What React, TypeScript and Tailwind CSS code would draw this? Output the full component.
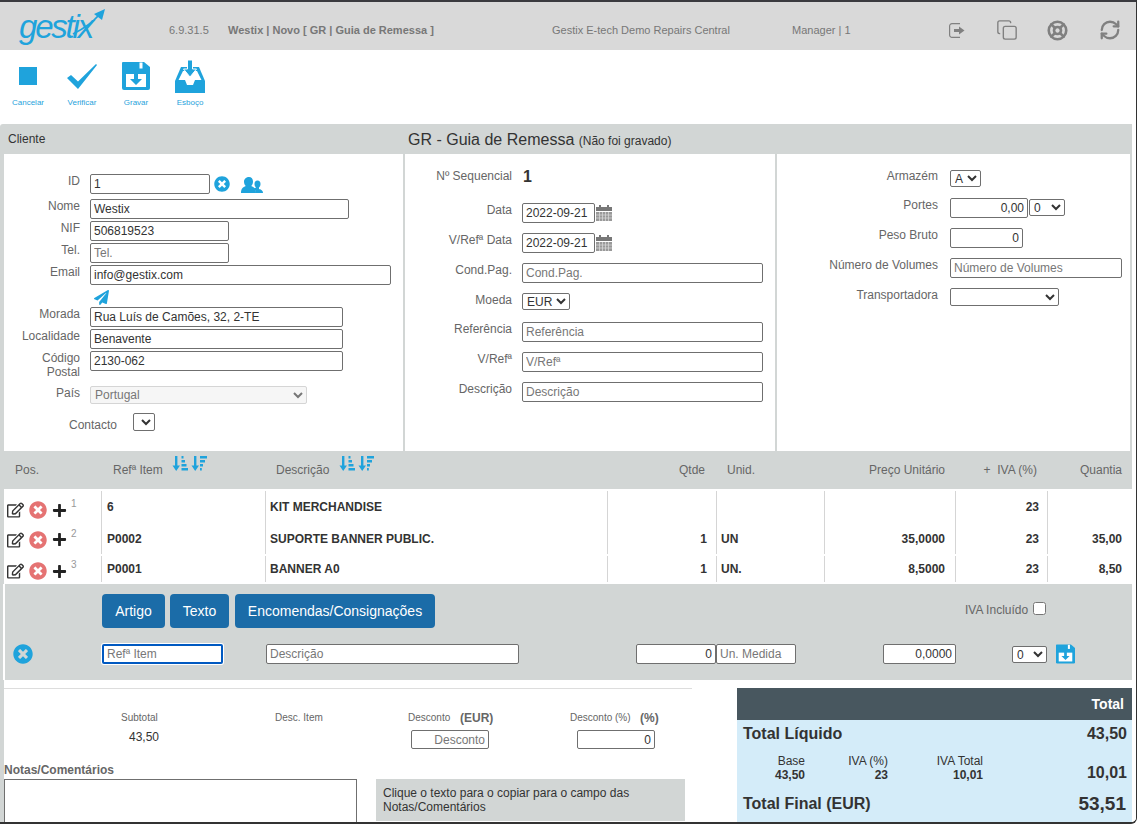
import type { ReactNode } from 'react';
import { Copy, LifeBuoy, RefreshCw } from 'lucide-react';
import { FaPaperPlane, FaPlus, FaRegEdit, FaTimesCircle } from 'react-icons/fa';

const inputCls = 'h-5 border border-[#6f6f6f] rounded-[2px] bg-white px-[3px] text-[12px] text-[#333] placeholder:text-[#777] outline-none';
const selectCls = 'border border-[#6f6f6f] rounded-[2px] bg-white text-[12px] text-[#333] outline-none';

function FloppyIcon({ className }: { className?: string }) {
  return (
    <svg viewBox="0 0 28 28" className={className}>
      <path fill="#1fa3dc" d="M1 0h21l6 5v21a2 2 0 0 1-2 2H2a2 2 0 0 1-2-2V1a1 1 0 0 1 1-1z" />
      <rect x="17.5" y="0.5" width="3" height="6" fill="#fff" />
      <path fill="#fff" d="M4 12h20v13H4z" />
      <path fill="#1fa3dc" d="M12 11h4v6h4l-6 6-6-6h4z" />
    </svg>
  );
}

function InboxIcon({ className }: { className?: string }) {
  return (
    <svg viewBox="0 0 30 33" className={className}>
      <polygon fill="#1fa3dc" points="6,7 24,7 30,21 30,33 0,33 0,21" />
      <polygon fill="#fff" points="8,11 22,11 26.5,20 20,20 18,25 12,25 10,20 3.5,20" />
      <path fill="#1fa3dc" stroke="#fff" strokeWidth="1" d="M12.5 0h5v9h4l-6.500 8-6.500-8h4z" />
    </svg>
  );
}

function CheckIcon() {
  return (
    <svg viewBox="0 0 30 25" className="h-[25px] w-[30px]">
      <polygon fill="#1fa3dc" points="0,14 4,11 11,17.500 29,0 30,1 11,25" />
    </svg>
  );
}

function UsersIcon() {
  return (
    <svg viewBox="0 0 22 16" className="ml-[11px] h-4 w-[22px] translate-y-[1px]">
      <path fill="#1fa3dc" d="M18 12c0 0 4 .5 4 4h-7c0-2-1-3.500-2.500-4.500 1-.5 2-.5 2.500-1-1-1-1.500-2-1.500-3.500 0-2 1-3.500 3-3.500s3 1.500 3 3.500c0 1.500-.5 2.500-1.500 3.500z" />
      <path fill="#1fa3dc" d="M8 0c2.500 0 4 2 4 4.500 0 2-.8 3.500-1.800 4.500 2.800 1 4.800 2.500 4.800 7H0c0-4.500 2-6 4.800-7C3.800 8 3 6.500 3 4.500 3 2 5.500 0 8 0z" />
    </svg>
  );
}

function SortIcon({ flip }: { flip?: boolean }) {
  return (
    <svg viewBox="0 0 16 15" className="h-[15px] w-[16px]">
      <path fill="#1fa3dc" d="M3 0h2.400v9.500H8L4.200 15 .5 9.500H3z" />
      {flip ? (
        <path fill="#1fa3dc" d="M9 0h7v2.500H9zM9 4h5v2.500H9zM9 8h3v2.500H9zM9 12h1.800v2.500H9z" />
      ) : (
        <path fill="#1fa3dc" d="M9.500 0h2v2.500h-2zM9.500 4h3.500v2.500H9.500zM9.500 8h5v2.500h-5zM9.500 12h6.500v2.500H9.500z" />
      )}
    </svg>
  );
}

function CalendarIcon() {
  return (
    <svg viewBox="0 0 16 16" className="ml-[1px] h-4 w-4 shrink-0 translate-y-[2px]">
      <path fill="#777" d="M0 2h3V0h2v2h6V0h2v2h3v4H0z" />
      <path fill="#999" d="M0 7h16v9H0z" />
      <path stroke="#ddd" strokeWidth=".7" d="M3.500 7v9M6.500 7v9M9.500 7v9M12.500 7v9M0 10h16M0 13h16" />
    </svg>
  );
}

function ExitIcon() {
  return (
    <svg viewBox="0 0 16 15" className="h-[15px] w-4" fill="none">
      <path stroke="#808080" strokeWidth="1.200" d="M11 .6H3A2.400 2.400 0 0 0 .6 3v9A2.400 2.400 0 0 0 3 14.400h8" />
      <path fill="#808080" d="M5 6h5V3.500l5.500 4-5.500 4V9H5z" />
    </svg>
  );
}

function Label({ children, className }: { children: ReactNode; className?: string }) {
  return <div className={`text-right text-[12px] leading-[14px] text-[#666] ${className ?? ''}`}>{children}</div>;
}

function ClientRow({ label, className, children }: { label: ReactNode; className: string; children: ReactNode }) {
  return (
    <div className={`flex ${className}`}>
      <Label className="w-[76px]">{label}</Label>
      <div className="ml-[10px] flex items-center">{children}</div>
    </div>
  );
}

function MidRow({ label, className, children }: { label: ReactNode; className: string; children: ReactNode }) {
  return (
    <div className={`flex ${className}`}>
      <Label className="w-[107px]">{label}</Label>
      <div className="ml-[10px] flex items-start">{children}</div>
    </div>
  );
}

function RightRow({ label, className, children }: { label: ReactNode; className: string; children: ReactNode }) {
  return (
    <div className={`flex ${className}`}>
      <Label className="w-[161px]">{label}</Label>
      <div className="ml-[12px] flex items-start">{children}</div>
    </div>
  );
}

const gridCols = 'grid grid-cols-[97px_164px_342px_109px_108px_131px_92px_85px]';

const items = [
  { pos: 1, ref: '6', desc: 'KIT MERCHANDISE', qty: '', unit: '', price: '', iva: '23', total: '', rowCls: 'h-[34px] pt-[2px]', iconCls: 'translate-y-[3px]' },
  { pos: 2, ref: 'P0002', desc: 'SUPORTE BANNER PUBLIC.', qty: '1', unit: 'UN', price: '35,0000', iva: '23', total: '35,00', rowCls: 'h-[31px]', iconCls: 'translate-y-[1px]' },
  { pos: 3, ref: 'P0001', desc: 'BANNER A0', qty: '1', unit: 'UN.', price: '8,5000', iva: '23', total: '8,50', rowCls: 'h-[28px] pt-[2px]', iconCls: 'translate-y-[2px]' },
];

const toolbar = [
  { label: 'Cancelar', icon: <div className="h-[18px] w-[18px] bg-[#1fa3dc]" /> },
  { label: 'Verificar', icon: <CheckIcon /> },
  { label: 'Gravar', icon: <FloppyIcon className="h-7 w-7" /> },
  { label: 'Esboço', icon: <InboxIcon className="h-[33px] w-[30px]" /> },
];

export default function App() {
  return (
    <div className="relative flex h-[824px] w-[1137px] flex-col overflow-hidden rounded-br-md border-r border-b-2 border-[#333] bg-white font-['Liberation_Sans',Arial,sans-serif] text-[#333]">
      <div className="h-[2px] shrink-0 bg-[#3a3a3f]" />

      {/* top bar */}
      <header className="flex h-[48px] shrink-0 items-center bg-[#d9d9d9] pt-[8px] text-[11px] text-[#777]">
        <div className="relative ml-[19px] h-[40px] w-[150px] shrink-0">
          <span className="absolute left-0 top-[-2px] text-[33px] italic leading-[38px] tracking-[-2.200px] text-[#1fa3dc]">gestix</span>
          <svg viewBox="0 0 40 30" className="absolute left-[52px] top-[-2px] h-[30px] w-[40px]">
            <path fill="none" stroke="#1fa3dc" strokeWidth="1.800" d="M2 26 C 12 21, 21 15, 28 7" />
            <path fill="#1fa3dc" d="M23 6l11-5-3 11z" />
          </svg>
        </div>
        <span className="w-[59px] shrink-0">6.9.31.5</span>
        <span className="w-[324px] shrink-0 font-bold">Westix | Novo [ GR | Guia de Remessa ]</span>
        <span className="w-[240px] shrink-0">Gestix E-tech Demo Repairs Central</span>
        <span className="w-[140px] shrink-0">Manager | 1</span>
        <div className="flex shrink-0 items-center text-[#808080]">
          <span className="flex w-[50px] justify-center"><ExitIcon /></span>
          <span className="flex w-[50px] justify-center"><Copy size={22} strokeWidth={1.500} /></span>
          <span className="flex w-[50px] justify-center"><LifeBuoy size={21} strokeWidth={3} /></span>
          <span className="flex w-[55px] justify-center"><RefreshCw size={22} strokeWidth={2.500} /></span>
        </div>
      </header>

      {/* toolbar */}
      <div className="flex h-[74px] shrink-0 pl-[1px] pt-[4px]">
        {toolbar.map(t => (
          <div key={t.label} className="flex w-[54px] flex-col items-center">
            <div className="flex h-[44px] items-center justify-center">{t.icon}</div>
            <div className="text-[8px] leading-[10px] text-[#1fa3dc]">{t.label}</div>
          </div>
        ))}
      </div>

      <div className="min-h-0 flex-1 bg-white">
        <div className="w-[1132px]">
          <div className="rounded-tl-[3px] bg-[#d2d6d5] pl-[4px]">
            {/* panel title */}
            <div className="flex h-[30px] items-center">
              <span className="w-[404px] pl-[4px] text-[12px] text-[#333]">Cliente</span>
              <span className="translate-y-[1px] text-[16px] text-[#333]">GR - Guia de Remessa <span className="text-[12px]">(Não foi gravado)</span></span>
            </div>

            {/* form columns */}
            <div className="flex h-[297px] gap-[2px]">
              <div className="w-[399px] bg-white pt-[20px]">
                <ClientRow label="ID" className="">
                  <input className={`${inputCls} w-[120px]`} defaultValue="1" />
                  <FaTimesCircle className="ml-[4px] h-[16px] w-[16px] text-[#1fa3dc]" />
                  <UsersIcon />
                </ClientRow>
                <ClientRow label="Nome" className="mt-[5px]"><input className={`${inputCls} w-[259px]`} defaultValue="Westix" /></ClientRow>
                <ClientRow label="NIF" className="mt-[2px]"><input className={`${inputCls} w-[139px]`} defaultValue="506819523" /></ClientRow>
                <ClientRow label="Tel." className="mt-[2px]"><input className={`${inputCls} w-[139px]`} placeholder="Tel." /></ClientRow>
                <ClientRow label="Email" className="mt-[2px]"><input className={`${inputCls} w-[301px]`} defaultValue="info@gestix.com" /></ClientRow>
                <div className="ml-[90px] mt-[5px] h-[15px]"><FaPaperPlane className="h-[15px] w-[15px] text-[#1fa3dc]" /></div>
                <ClientRow label="Morada" className="mt-[2px]"><input className={`${inputCls} w-[253px]`} defaultValue="Rua Luís de Camões, 32, 2-TE" /></ClientRow>
                <ClientRow label="Localidade" className="mt-[2px]"><input className={`${inputCls} w-[253px]`} defaultValue="Benavente" /></ClientRow>
                <div className="mt-[2px] flex h-[35px] items-start">
                  <Label className="w-[76px]">Código<br />Postal</Label>
                  <input className={`${inputCls} ml-[10px] w-[253px]`} defaultValue="2130-062" />
                </div>
                <ClientRow label="País" className="h-[18px]">
                  <select disabled className="h-[18px] w-[217px] rounded-[2px] border border-[#d5d5d5] bg-[#f6f6f6] text-[12px] text-[#777]"><option>Portugal</option></select>
                </ClientRow>
                <div className="mt-[9px] flex">
                  <span className="ml-[65px] mt-[5px] text-[12px] leading-[14px] text-[#666]">Contacto</span>
                  <select className={`${selectCls} ml-[16px] h-[18px] w-[22px]`} />
                </div>
              </div>

              <div className="w-[370px] bg-white pt-[15px]">
                <div className="flex">
                  <Label className="w-[107px]">Nº Sequencial</Label>
                  <span className="ml-[11px] text-[16px] font-bold leading-[16px]">1</span>
                </div>
                <MidRow label="Data" className="mt-[18px]">
                  <input className={`${inputCls} w-[73px]`} defaultValue="2022-09-21" /><CalendarIcon />
                </MidRow>
                <MidRow label="V/Refª Data" className="mt-[10px]">
                  <input className={`${inputCls} w-[73px]`} defaultValue="2022-09-21" /><CalendarIcon />
                </MidRow>
                <MidRow label="Cond.Pag." className="mt-[10px]"><input className={`${inputCls} w-[241px]`} placeholder="Cond.Pag." /></MidRow>
                <MidRow label="Moeda" className="mt-[10px]">
                  <select className={`${selectCls} h-[17px] w-[48px]`}><option>EUR</option></select>
                </MidRow>
                <MidRow label="Referência" className="mt-[12px]"><input className={`${inputCls} w-[241px]`} placeholder="Referência" /></MidRow>
                <MidRow label="V/Refª" className="mt-[10px]"><input className={`${inputCls} w-[241px]`} placeholder="V/Refª" /></MidRow>
                <MidRow label="Descrição" className="mt-[10px]"><input className={`${inputCls} w-[241px]`} placeholder="Descrição" /></MidRow>
              </div>

              <div className="w-[353px] bg-white pt-[15px]">
                <RightRow label="Armazém" className="">
                  <select className={`${selectCls} mt-[1px] h-[17px] w-[31px]`}><option>A</option></select>
                </RightRow>
                <RightRow label="Portes" className="mt-[11px]">
                  <input className={`${inputCls} w-[78px] text-right`} defaultValue="0,00" />
                  <select className={`${selectCls} ml-[1px] mt-[1px] h-[17px] w-[36px]`}><option>0</option></select>
                </RightRow>
                <RightRow label="Peso Bruto" className="mt-[10px]"><input className={`${inputCls} w-[73px] text-right`} defaultValue="0" /></RightRow>
                <RightRow label="Número de Volumes" className="mt-[10px]"><input className={`${inputCls} w-[172px]`} placeholder="Número de Volumes" /></RightRow>
                <RightRow label="Transportadora" className="mt-[10px]">
                  <select className={`${selectCls} h-[18px] w-[109px]`} />
                </RightRow>
              </div>
            </div>

            {/* table header */}
            <div className={`${gridCols} h-[38px] items-center text-[12px] text-[#666]`}>
              <span className="pl-[11px]">Pos.</span>
              <span className="flex pl-[12px]">
                <span className="w-[59px]">Refª Item</span>
                <span className="flex -translate-y-[5px] gap-[3px]"><SortIcon /><SortIcon flip /></span>
              </span>
              <span className="flex pl-[11px]">
                <span className="w-[63px]">Descrição</span>
                <span className="flex -translate-y-[5px] gap-[3px]"><SortIcon /><SortIcon flip /></span>
              </span>
              <span className="pr-[11px] text-right">Qtde</span>
              <span className="pl-[11px]">Unid.</span>
              <span className="pr-[10px] text-right">Preço Unitário</span>
              <span className="pr-[10px] text-right">+&nbsp; IVA (%)</span>
              <span className="pr-[10px] text-right">Quantia</span>
            </div>

            {/* rows */}
            <div className="bg-white pb-[2px] text-[12px] font-bold text-[#333]">
              {items.map(it => (
                <div key={it.pos} className={`${gridCols} ${it.rowCls}`}>
                  <div className={`flex items-center pl-[3px] font-normal ${it.iconCls}`}>
                    <FaRegEdit className="h-[16px] w-[17px] text-[#333]" />
                    <FaTimesCircle className="ml-[5px] h-[18px] w-[18px] text-[#e57373]" />
                    <FaPlus className="ml-[5px] h-[15px] w-[15px] text-[#222]" />
                    <span className="ml-[4px] -translate-y-[6px] text-[10px] leading-[10px] text-[#999]">{it.pos}</span>
                  </div>
                  <div className="flex items-center border-l border-[#d5d5d5] pl-[5px]">{it.ref}</div>
                  <div className="flex items-center border-l border-[#d5d5d5] pl-[4px]">{it.desc}</div>
                  <div className="flex items-center justify-end border-l border-[#d5d5d5] pr-[9px]">{it.qty}</div>
                  <div className="flex items-center border-l border-[#d5d5d5] pl-[4px]">{it.unit}</div>
                  <div className="flex items-center justify-end border-l border-[#d5d5d5] pr-[10px]">{it.price}</div>
                  <div className="flex items-center justify-end border-l border-[#d5d5d5] pr-[8px]">{it.iva}</div>
                  <div className="flex items-center justify-end border-l border-[#d5d5d5] pr-[10px]">{it.total}</div>
                </div>
              ))}
            </div>
          </div>

          {/* add item panel */}
          <div className="border-l-[3px] border-[#d2d6d5] pl-[2px]">
            <div className="h-[96px] bg-[#d2d6d5] pt-[10px]">
              <div className="flex h-[34px] items-center pl-[97px] text-[14px] text-white">
                <button className="h-[34px] w-[63px] rounded-[4px] bg-[#1b6ca8]">Artigo</button>
                <button className="ml-[5px] h-[34px] w-[59px] rounded-[4px] bg-[#1b6ca8]">Texto</button>
                <button className="ml-[6px] h-[34px] w-[200px] rounded-[4px] bg-[#1b6ca8]">Encomendas/Consignações</button>
                <span className="ml-[530px] -translate-y-[1px] text-[12px] text-[#666]">IVA Incluído</span>
                <input type="checkbox" className="ml-[5px] h-[13px] w-[13px] -translate-y-[3px]" />
              </div>
              <div className="mt-[16px] flex h-5 items-center pl-[8px]">
                <FaTimesCircle className="h-5 w-5 text-[#1fa3dc]" />
                <input className={`${inputCls} ml-[69px] w-[121px] border-2 border-[#0059c1] ring-1 ring-white`} placeholder="Refª Item" />
                <input className={`${inputCls} ml-[43px] w-[253px]`} placeholder="Descrição" />
                <input className={`${inputCls} ml-[117px] w-[80px] text-right`} defaultValue="0" />
                <input className={`${inputCls} w-[80px]`} placeholder="Un. Medida" />
                <input className={`${inputCls} ml-[87px] w-[73px] text-right`} defaultValue="0,0000" />
                <select className={`${selectCls} ml-[56px] h-[17px] w-[35px]`}><option>0</option></select>
                <FloppyIcon className="ml-[9px] h-5 w-[19px]" />
              </div>
            </div>
          </div>

          {/* totals */}
          <div className="flex border-l-[4px] border-[#d2d6d5]">
            <div className="w-[688px] shrink-0 pt-[8px]">
              <div className="border-t border-[#ddd]" />
              <div className="h-[73px] pt-[22px]">
                <div className="flex h-[14px] items-center text-[10px] leading-[10px] text-[#666]">
                  <span className="ml-[117px] w-[154px]">Subtotal</span>
                  <span className="w-[133px]">Desc. Item</span>
                  <span className="w-[52px]">Desconto</span>
                  <span className="w-[110px] text-[12px] font-bold">(EUR)</span>
                  <span className="w-[70px]">Desconto (%)</span>
                  <span className="text-[12px] font-bold">(%)</span>
                </div>
                <div className="mt-[5px] flex items-center">
                  <span className="ml-[125px] w-[282px] -translate-y-[3px] text-[12px]">43,50</span>
                  <input className={`${inputCls} h-[19px] w-[78px] text-right`} placeholder="Desconto" />
                  <input className={`${inputCls} ml-[88px] h-[19px] w-[78px] text-right`} defaultValue="0" />
                </div>
              </div>
              <div className="flex h-[14px] translate-y-[1px] items-center text-[12px] font-bold text-[#666]">Notas/Comentários</div>
              <div className="mt-[3px] flex items-start">
                <div className="h-[46px] w-[353px] border border-b-0 border-[#6f6f6f]" />
                <div className="ml-[19px] h-[42px] w-[309px] bg-[#d2d6d5] px-[7px] py-[7px] text-[12px] leading-[14px] text-[#333]">Clique o texto para o copiar para o campo das Notas/Comentários</div>
              </div>
            </div>
            <div className="ml-[45px] mt-[8px] w-[395px] shrink-0">
              <div className="flex h-[32px] items-center justify-end bg-[#48575f] pr-[8px] text-[14px] font-bold text-white">Total</div>
              <div className="h-[105px] bg-[#d4ecf9] text-[#333]">
                <div className="flex h-[27px] items-center justify-between pl-[6px] pr-[5px] text-[16px] font-bold"><span>Total Líquido</span><span>43,50</span></div>
                <div className="flex h-[46px] items-start pr-[5px] pt-[7px]">
                  <div className="w-[68px] text-right text-[12px] leading-[14px]">Base<br /><b>43,50</b></div>
                  <div className="w-[83px] text-right text-[12px] leading-[14px]">IVA (%)<br /><b>23</b></div>
                  <div className="w-[95px] text-right text-[12px] leading-[14px]">IVA Total<br /><b>10,01</b></div>
                  <div className="flex-1 translate-y-[7px] text-right text-[16px] font-bold">10,01</div>
                </div>
                <div className="flex h-[22px] items-center justify-between pl-[6px] pr-[6px] font-bold"><span className="text-[16px]">Total Final (EUR)</span><span className="text-[19px]">53,51</span></div>
              </div>
            </div>
          </div>
        </div>
      </div>
    </div>
  );
}
